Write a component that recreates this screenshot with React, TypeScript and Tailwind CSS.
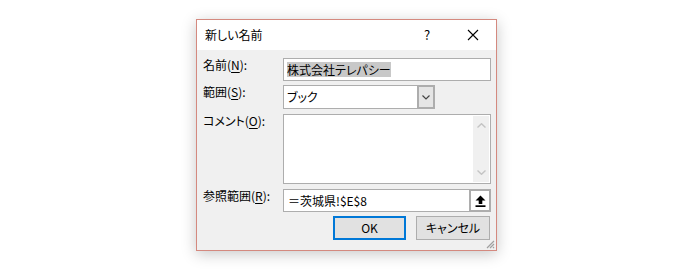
import React from "react";

function Label({ children }: { children: React.ReactNode }) {
  return (
    <div className="w-[80px] shrink-0 text-[12px] leading-[16px] text-[#000] -mt-[1px]">{children}</div>
  );
}

function U({ c }: { c: string }) {
  return <span className="underline underline-offset-2 decoration-1">{c}</span>;
}

export default function App() {
  return (
    <div className="w-[698px] h-[274px] bg-white pl-[196px] pt-[19px] font-['Noto_Sans_CJK_JP','Noto_Sans',sans-serif] [font-feature-settings:'palt']">
      <div className="w-[301px] h-[232px] border border-[#d4897f] bg-[#f0f0f0] flex flex-col shadow-[0_3px_14px_rgba(0,0,0,0.22)]">
        {/* title bar */}
        <div className="h-[30px] bg-white flex items-center shrink-0">
          <div className="pl-[8px] text-[12px] text-black flex-1">新しい名前</div>
          <div className="w-[46px] text-center text-[13px] text-black">?</div>
          <div className="w-[46px] flex items-center justify-center">
            <svg width="12" height="12" viewBox="0 0 12 12">
              <path d="M1 1 L11 11 M11 1 L1 11" stroke="#000" strokeWidth="1.1" />
            </svg>
          </div>
        </div>
        {/* body */}
        <div className="relative flex-1 flex flex-col pl-[6px] pt-[8px]">
          {/* name */}
          <div className="flex items-start">
            <Label>
              名前(<U c="N" />):
            </Label>
            <div className="w-[208px] h-[23px] border border-[#adadad] bg-white flex items-center pl-[3px]">
              <span className="bg-[#c8c8c8] text-[12px] leading-[15px] text-black">株式会社テレパシー</span>
            </div>
          </div>
          {/* scope */}
          <div className="flex items-start mt-[4px]">
            <Label>
              範囲(<U c="S" />):
            </Label>
            <div className="w-[152px] h-[24px] border border-[#adadad] bg-white flex">
              <div className="flex-1 flex items-center pl-[3px] text-[12px] text-black">ブック</div>
              <div className="w-[18px] -my-px -mr-px border-2 border-[#adadad] bg-[#e5e5e5] flex items-center justify-center">
                <svg width="8" height="5" viewBox="0 0 8 5">
                  <path d="M0.5 0.5 L4 4 L7.5 0.5" stroke="#444" strokeWidth="1.2" fill="none" />
                </svg>
              </div>
            </div>
          </div>
          {/* comment */}
          <div className="flex items-start mt-[5px]">
            <Label>
              コメント(<U c="O" />):
            </Label>
            <div className="w-[208px] h-[70px] border border-[#adadad] bg-white flex justify-end p-[1px]">
              <div className="w-[16px] h-full bg-[#f0f0f0] flex flex-col items-center justify-between py-[7px]">
                <svg width="9" height="5" viewBox="0 0 9 5">
                  <path d="M0.5 4.5 L4.5 0.7 L8.5 4.5" stroke="#c4c4c4" strokeWidth="1.4" fill="none" />
                </svg>
                <svg width="9" height="5" viewBox="0 0 9 5">
                  <path d="M0.5 0.5 L4.5 4.3 L8.5 0.5" stroke="#c4c4c4" strokeWidth="1.4" fill="none" />
                </svg>
              </div>
            </div>
          </div>
          {/* ref */}
          <div className="flex items-start mt-[5px]">
            <Label>
              参照範囲(<U c="R" />):
            </Label>
            <div className="w-[208px] h-[23px] border border-[#adadad] bg-white flex">
              <div className="flex-1 flex items-center pl-[4px] text-[12px] text-black">＝茨城県!$E$8</div>
              <div className="w-[22px] -my-px -mr-px border-2 border-[#adadad] bg-white flex items-center justify-center">
                <svg width="11" height="12" viewBox="0 0 11 12">
                  <path d="M5.5 0.5 L10.5 5.5 L7.3 5.5 L7.3 9 L3.7 9 L3.7 5.5 L0.5 5.5 Z" fill="#000" />
                  <rect x="0.5" y="10.3" width="10" height="1.7" fill="#000" />
                </svg>
              </div>
            </div>
          </div>
          {/* buttons */}
          <div className="flex mt-[4px] pl-[130px]">
            <div className="w-[73px] h-[24px] border-2 border-[#0078d7] bg-[#e1e1e1] flex items-center justify-center text-[12px] text-black">
              OK
            </div>
            <div className="w-[74px] h-[24px] ml-[10px] border border-[#adadad] bg-[#e1e1e1] flex items-center justify-center text-[12px] text-black">
              キャンセル
            </div>
          </div>
          {/* resize grip */}
          <div className="absolute right-[1px] bottom-[1px]">
            <svg width="10" height="10" viewBox="0 0 10 10">
              <path d="M9 2 L2 9 M9 5 L5 9 M9 8 L8 9" stroke="#a0a0a0" strokeWidth="1.2" />
            </svg>
          </div>
        </div>
      </div>
    </div>
  );
}
